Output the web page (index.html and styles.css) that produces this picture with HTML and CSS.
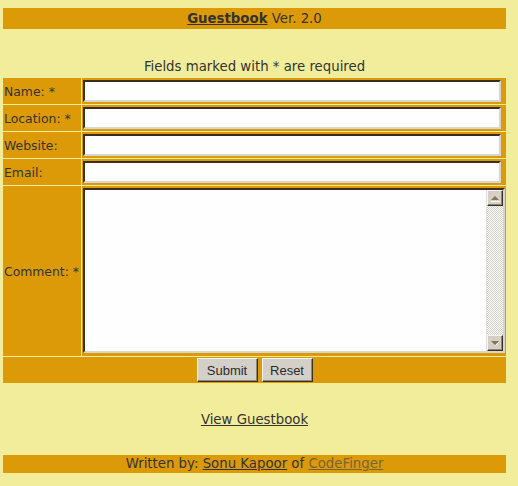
FILE: index.html
```html
<!DOCTYPE html>
<html>
<head>
<meta charset="utf-8">
<title>Guestbook Ver. 2.0</title>
<link rel="stylesheet" href="styles.css">
</head>
<body>
<div class="page">
  <div class="titlebar"><a href="#" class="title-link">Guestbook</a>&nbsp;Ver. 2.0</div>
  <div class="note">Fields marked with * are required</div>
  <form class="form">
    <label class="lbl" for="name">Name:&nbsp;*</label>
    <div class="field"><input id="name" class="inp" type="text"></div>
    <label class="lbl" for="loc">Location:&nbsp;*</label>
    <div class="field"><input id="loc" class="inp" type="text"></div>
    <label class="lbl" for="web">Website:</label>
    <div class="field"><input id="web" class="inp" type="text"></div>
    <label class="lbl" for="mail">Email:</label>
    <div class="field"><input id="mail" class="inp" type="text"></div>
    <label class="lbl" for="cmt">Comment:&nbsp;*</label>
    <div class="field field-ta">
      <div class="ta-box">
        <textarea id="cmt" class="ta"></textarea>
        <div class="sb">
          <div class="sb-btn">
            <svg width="14" height="14" viewBox="0 0 14 14"><polygon points="3,9 7,5 11,9" fill="#8f7246"/><line x1="3" y1="10.5" x2="12" y2="10.5" stroke="#fff" stroke-width="1"/></svg>
          </div>
          <div class="sb-track"></div>
          <div class="sb-btn">
            <svg width="14" height="14" viewBox="0 0 14 14"><polygon points="3,5 11,5 7,9" fill="#8f7246"/><line x1="7.5" y1="9.5" x2="11.5" y2="5.5" stroke="#fff" stroke-width="1"/></svg>
          </div>
        </div>
      </div>
    </div>
    <div class="actions">
      <button type="button" class="btn btn-submit">Submit</button>
      <button type="reset" class="btn btn-reset">Reset</button>
    </div>
  </form>
  <div class="view"><a href="#" class="link">View Guestbook</a></div>
  <div class="footer">Written by:&nbsp;<a href="#" class="link">Sonu Kapoor</a>&nbsp;of&nbsp;<a href="#" class="link link-light">CodeFinger</a></div>
</div>
</body>
</html>
```
FILE: styles.css
```css
html, body {
  margin: 0;
  padding: 0;
  background: #f2ed9b;
}
body {
  font-family: "DejaVu Sans", Verdana, sans-serif;
  font-size: 13.3px;
  color: #333;
}
.page {
  width: 503px;
  margin-left: 3px;
  padding-top: 8px;
}
.titlebar {
  height: 21px;
  line-height: 21px;
  background: #dd9a08;
  text-align: center;
  white-space: nowrap;
}
.title-link {
  color: #333;
  font-weight: bold;
  text-decoration: underline;
}
.note {
  margin-top: 30px;
  line-height: 16px;
  text-align: center;
}
.form {
  margin: 3px 0 0 0;
  display: grid;
  grid-template-columns: 78px 1fr;
  grid-template-rows: 26px 26px 26px 26px 170px 26px;
  gap: 1px;
}
.lbl {
  background: #dd9a08;
  display: flex;
  align-items: center;
  padding-left: 1px;
  white-space: nowrap;
  font-size: 12.4px;
}
.field {
  background: #dd9a08;
  padding: 2px 5px 2px 1px;
}
.inp {
  display: block;
  box-sizing: border-box;
  width: 418px;
  height: 22px;
  margin: 0;
  padding: 1px 2px;
  background: #fefefe;
  border-style: solid;
  border-width: 2px;
  border-color: #3a2e1c #d8d6d0 #d8d6d0 #3a2e1c;
  font-family: "DejaVu Sans", sans-serif;
  font-size: 12px;
  outline: none;
}
.field-ta {
  padding: 2px 1px 3px 1px;
}
.ta-box {
  box-sizing: border-box;
  width: 422px;
  height: 165px;
  display: flex;
  background: #fefefe;
  border-style: solid;
  border-width: 2px;
  border-color: #3a2e1c #d8d6d0 #d8d6d0 #3a2e1c;
}
.ta {
  flex: 1;
  margin: 0;
  padding: 2px;
  border: 0;
  resize: none;
  background: #fefefe;
  outline: none;
  font-family: "DejaVu Sans", sans-serif;
  font-size: 12px;
}
.sb {
  width: 16px;
  display: flex;
  flex-direction: column;
  border-left: 1px solid #e4e2dc;
}
.sb-btn {
  box-sizing: border-box;
  width: 16px;
  height: 16px;
  background: #d4d0c8;
  border-style: solid;
  border-width: 1px;
  border-color: #f4f4f4 #3a3020 #3a3020 #f4f4f4;
  box-shadow: inset -1px -1px 0 #8a8680;
  display: flex;
  align-items: center;
  justify-content: center;
}
.sb-btn svg {
  display: block;
}
.sb-track {
  flex: 1;
  background: repeating-conic-gradient(#d4d0c8 0 25%, #ffffff 0 50%) 0 0 / 2px 2px;
}
.actions {
  grid-column: 1 / -1;
  background: #dd9a08;
  display: flex;
  justify-content: center;
  align-items: flex-start;
  gap: 4px;
  padding-top: 1px;
}
.btn {
  box-sizing: border-box;
  height: 24px;
  margin: 0;
  padding: 0;
  background: #d4d0c8;
  border-style: solid;
  border-width: 1px;
  border-color: #f6f6f6 #3a3020 #3a3020 #f6f6f6;
  box-shadow: inset -1px -1px 0 #8a8680;
  font-family: "Liberation Sans", Arial, sans-serif;
  font-size: 13px;
  color: #2a2a2a;
}
.btn-submit {
  width: 61px;
}
.btn-reset {
  width: 51px;
}
.view {
  margin-top: 29px;
  line-height: 16px;
  text-align: center;
}
.link {
  color: #333;
  text-decoration: underline;
}
.link-light {
  color: #7a6535;
}
.footer {
  margin-top: 27px;
  height: 18px;
  line-height: 18px;
  background: #dd9a08;
  text-align: center;
  white-space: nowrap;
}
```
